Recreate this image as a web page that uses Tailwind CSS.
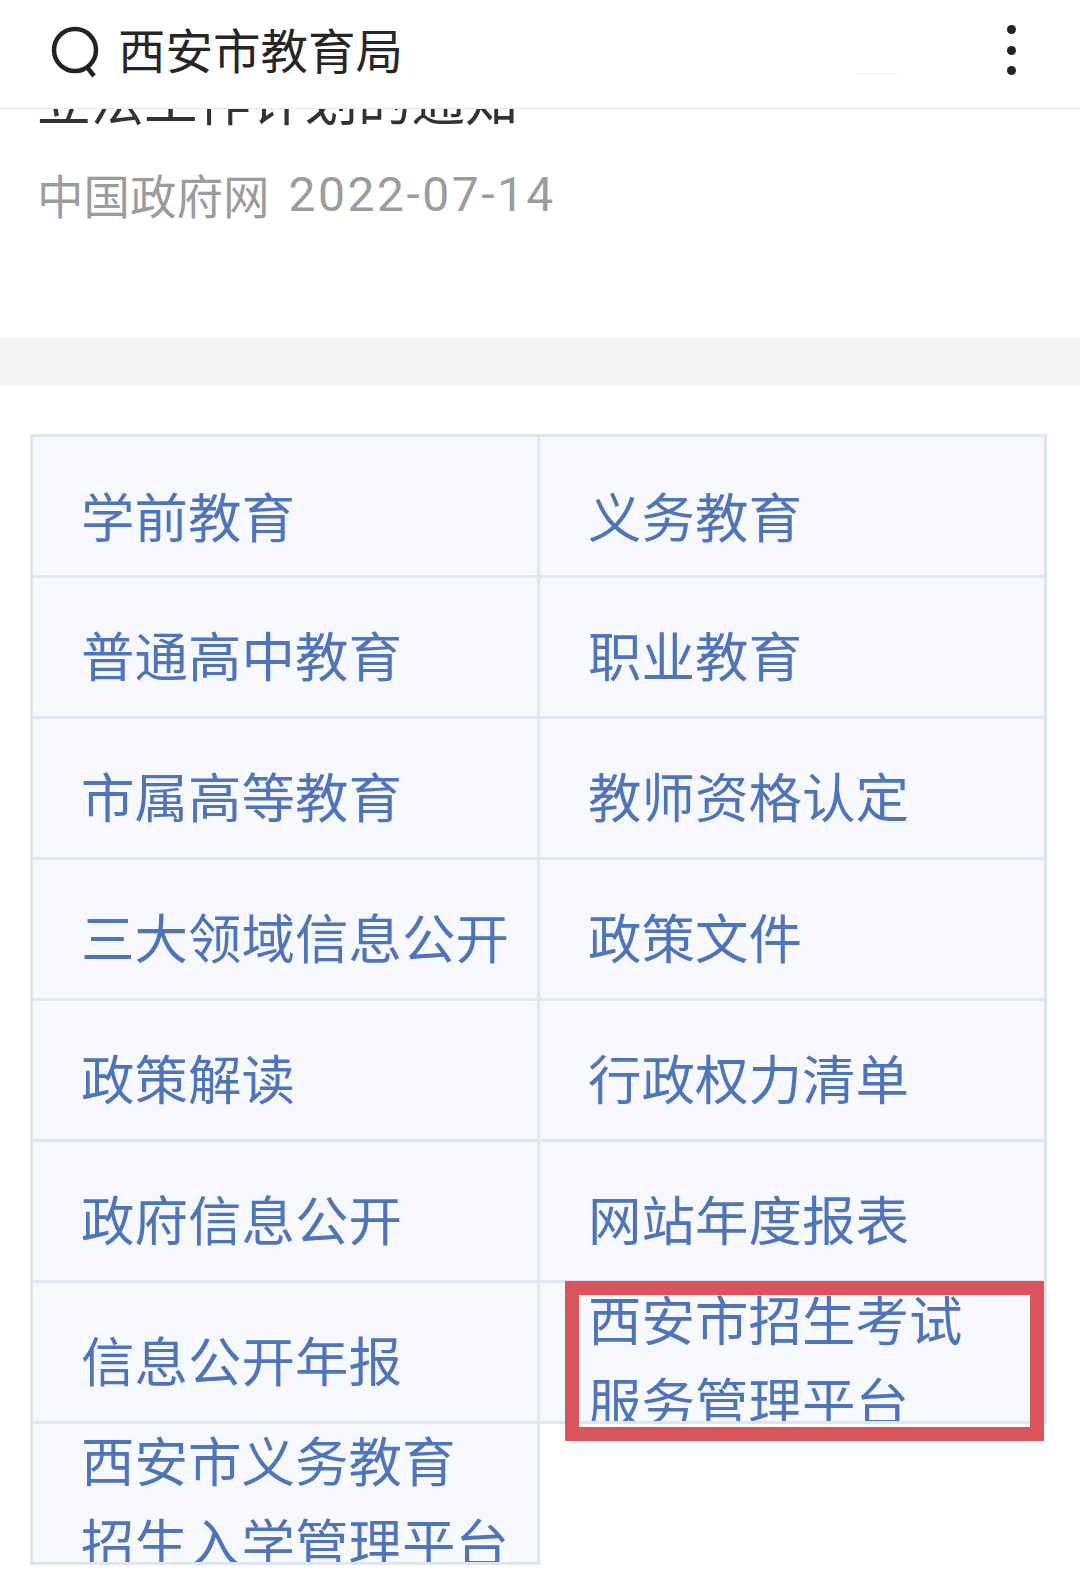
<!DOCTYPE html>
<html lang="zh-CN">
<head>
  <meta charset="UTF-8" />
  <meta name="viewport" content="width=device-width, initial-scale=1.0" />
  <title>西安市教育局</title>
  <script src="https://cdn.jsdelivr.net/npm/@tailwindcss/browser@4"></script>
</head>
<body class="bg-white">
  <div class="relative w-[1080px] h-[1596px] overflow-hidden bg-white font-['Noto_Sans_CJK_SC','Noto_Sans',sans-serif]">

    <!-- Search bar -->
    <header class="relative z-10 flex items-center h-[109px] border-b border-[#e8e8e8] pl-[51px] pr-[64px] bg-white">
      <svg class="w-[50px] h-[52px] shrink-0 -mt-[5px]" viewBox="0 0 50 52" fill="none" stroke="#222222" stroke-width="4.5">
        <circle cx="24" cy="24" r="21" />
        <path d="M36 41l7 9" />
      </svg>
      <span class="ml-[17px] -mt-[11px] text-[47.5px] leading-none text-[#262626]">西安市教育局</span>
      <div class="ml-auto flex flex-col gap-[11.5px] -mt-[8px]">
        <span class="block w-[9px] h-[9px] rounded-full bg-[#222222]"></span>
        <span class="block w-[9px] h-[9px] rounded-full bg-[#222222]"></span>
        <span class="block w-[9px] h-[9px] rounded-full bg-[#222222]"></span>
      </div>
      <span class="absolute left-[856px] top-[74px] w-[42px] h-[1px] bg-[#f3f3f3]"></span>
    </header>

    <!-- Article tail, scrolled under the bar -->
    <section class="h-[229px] overflow-hidden pl-[37px]">
      <p class="-mt-[41px] text-[53.5px] leading-[60px] text-[#333333] whitespace-nowrap">立法工作计划的通知</p>
      <p class="mt-[34px] flex items-center text-[46.5px] leading-[60px] text-[#9c9c9c] whitespace-nowrap">
        <span>中国政府网</span>
        <span class="ml-[19px] mt-[3px] text-[48px] font-['Roboto',sans-serif] tracking-[2.5px]">2022-07-14</span>
      </p>
    </section>

    <div class="h-[48px] bg-[#f5f5f6]"></div>

    <!-- Link table -->
    <div class="mt-[48px] ml-[30px] w-[1017px] grid grid-cols-[510px_507px] text-[53.5px] leading-[82px] text-[#4f74b8] whitespace-pre-line">
      <a class="flex items-center h-[144px] pt-[17px] pl-[48px] overflow-hidden bg-[#f6f8fc] border-[3px] border-[#dde6f1]">学前教育</a>
      <a class="flex items-center h-[144px] pt-[17px] pl-[48px] overflow-hidden bg-[#f6f8fc] border-t-[3px] border-r-[3px] border-b-[3px] border-[#dde6f1]">义务教育</a>
      <a class="flex items-center h-[141px] pt-[14px] pl-[48px] overflow-hidden bg-[#f6f8fc] border-l-[3px] border-r-[3px] border-b-[3px] border-[#dde6f1]">普通高中教育</a>
      <a class="flex items-center h-[141px] pt-[14px] pl-[48px] overflow-hidden bg-[#f6f8fc] border-r-[3px] border-b-[3px] border-[#dde6f1]">职业教育</a>
      <a class="flex items-center h-[141px] pt-[14px] pl-[48px] overflow-hidden bg-[#f6f8fc] border-l-[3px] border-r-[3px] border-b-[3px] border-[#dde6f1]">市属高等教育</a>
      <a class="flex items-center h-[141px] pt-[14px] pl-[48px] overflow-hidden bg-[#f6f8fc] border-r-[3px] border-b-[3px] border-[#dde6f1]">教师资格认定</a>
      <a class="flex items-center h-[141px] pt-[14px] pl-[48px] overflow-hidden bg-[#f6f8fc] border-l-[3px] border-r-[3px] border-b-[3px] border-[#dde6f1]">三大领域信息公开</a>
      <a class="flex items-center h-[141px] pt-[14px] pl-[48px] overflow-hidden bg-[#f6f8fc] border-r-[3px] border-b-[3px] border-[#dde6f1]">政策文件</a>
      <a class="flex items-center h-[141px] pt-[14px] pl-[48px] overflow-hidden bg-[#f6f8fc] border-l-[3px] border-r-[3px] border-b-[3px] border-[#dde6f1]">政策解读</a>
      <a class="flex items-center h-[141px] pt-[14px] pl-[48px] overflow-hidden bg-[#f6f8fc] border-r-[3px] border-b-[3px] border-[#dde6f1]">行政权力清单</a>
      <a class="flex items-center h-[141px] pt-[14px] pl-[48px] overflow-hidden bg-[#f6f8fc] border-l-[3px] border-r-[3px] border-b-[3px] border-[#dde6f1]">政府信息公开</a>
      <a class="flex items-center h-[141px] pt-[14px] pl-[48px] overflow-hidden bg-[#f6f8fc] border-r-[3px] border-b-[3px] border-[#dde6f1]">网站年度报表</a>
      <a class="flex items-center h-[141px] pt-[14px] pl-[48px] overflow-hidden bg-[#f6f8fc] border-l-[3px] border-r-[3px] border-b-[3px] border-[#dde6f1]">信息公开年报</a>
      <a class="flex items-center h-[141px] pt-[14px] pl-[48px] overflow-hidden bg-[#f6f8fc] border-r-[3px] border-b-[3px] border-[#dde6f1]"><span>西安市招生考试
服务管理平台</span></a>
      <a class="flex items-center h-[141px] pt-[14px] pl-[48px] overflow-hidden bg-[#f6f8fc] border-l-[3px] border-r-[3px] border-b-[3px] border-[#dde6f1]"><span>西安市义务教育
招生入学管理平台</span></a>
    </div>

    <!-- Red annotation box drawn over the screenshot -->
    <div class="absolute left-[565px] top-[1281px] w-[479px] h-[160px] border-[14px] border-[#d9545b]"></div>
  </div>
</body>
</html>
